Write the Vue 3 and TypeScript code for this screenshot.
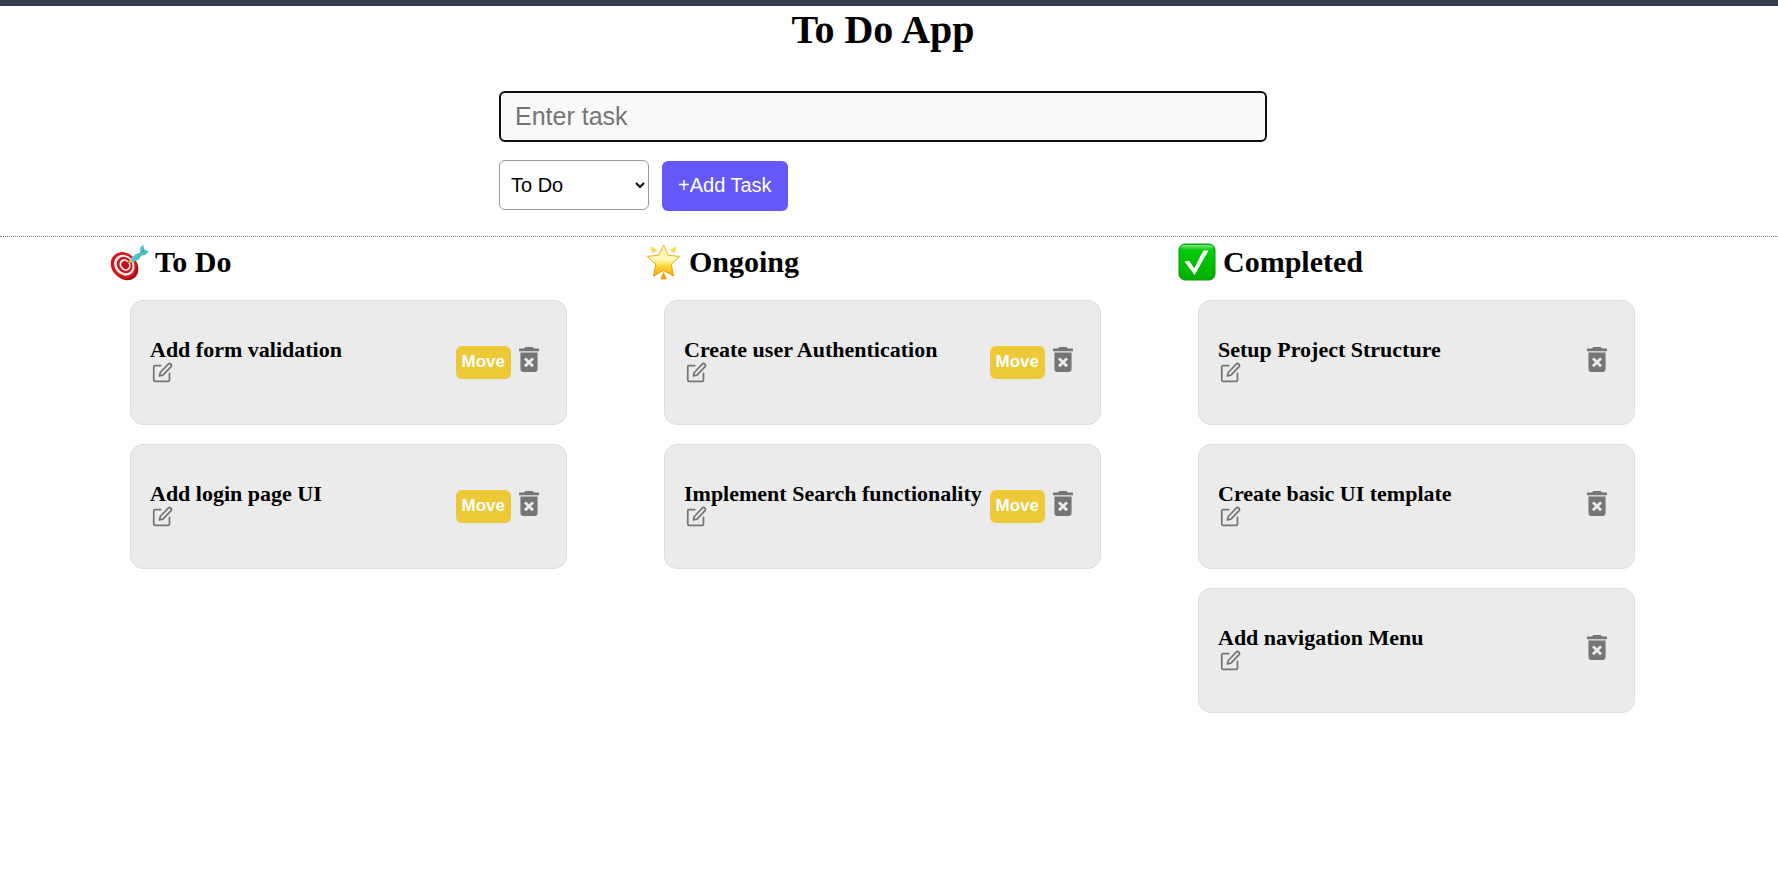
<script setup lang="ts">
import { ref } from 'vue'

type Status = 'todo' | 'ongoing' | 'completed'
interface Task { id: number; title: string; status: Status }

const columns: { key: Status; label: string }[] = [
  { key: 'todo', label: 'To Do' },
  { key: 'ongoing', label: 'Ongoing' },
  { key: 'completed', label: 'Completed' },
]

const tasks = ref<Task[]>([
  { id: 1, title: 'Add form validation', status: 'todo' },
  { id: 2, title: 'Add login page UI', status: 'todo' },
  { id: 3, title: 'Create user Authentication', status: 'ongoing' },
  { id: 4, title: 'Implement Search functionality', status: 'ongoing' },
  { id: 5, title: 'Setup Project Structure', status: 'completed' },
  { id: 6, title: 'Create basic UI template', status: 'completed' },
  { id: 7, title: 'Add navigation Menu', status: 'completed' },
])

const draft = ref('')
const draftStatus = ref<Status>('todo')
const editing = ref<Task | null>(null)

const tasksIn = (status: Status) => tasks.value.filter((t) => t.status === status)

function save() {
  const title = draft.value.trim()
  if (!title) return
  if (editing.value) editing.value.title = title
  else tasks.value.push({ id: Date.now(), title, status: draftStatus.value })
  editing.value = null
  draft.value = ''
}

function edit(task: Task) {
  editing.value = task
  draft.value = task.title
}

function move(task: Task) {
  task.status = task.status === 'todo' ? 'ongoing' : 'completed'
}

function remove(task: Task) {
  tasks.value = tasks.value.filter((t) => t.id !== task.id)
}
</script>

<template>
  <div class="page">
    <header class="header">
      <h1 class="title">To Do App</h1>
      <form class="form" @submit.prevent="save">
        <input v-model="draft" class="task-input" type="text" placeholder="Enter task" aria-label="Enter task" />
        <div class="actions">
          <select v-model="draftStatus" class="status" aria-label="Status">
            <option v-for="c in columns" :key="c.key" :value="c.key">{{ c.label }}</option>
          </select>
          <button class="add" type="submit">+Add Task</button>
        </div>
      </form>
    </header>

    <main class="board">
      <section v-for="c in columns" :key="c.key" class="column">
        <h2 class="heading">
          <svg v-if="c.key === 'todo'" class="emoji" viewBox="0 0 40 40" aria-hidden="true">
            <defs>
              <linearGradient id="dart" x1="0" y1="0" x2="1" y2="1">
                <stop offset="0" stop-color="#7fe3e6" /><stop offset="1" stop-color="#2a9fae" />
              </linearGradient>
            </defs>
            <ellipse cx="16.5" cy="25" rx="12" ry="14" transform="rotate(-40 16.5 25)" fill="#9c0d12" />
            <ellipse cx="14.8" cy="23.4" rx="12.4" ry="14" transform="rotate(-40 14.8 23.4)" fill="#d5151b" />
            <ellipse cx="15.3" cy="23.2" rx="9.6" ry="11" transform="rotate(-40 15.3 23.2)" fill="#f4eeee" />
            <ellipse cx="15.7" cy="23" rx="7.4" ry="8.6" transform="rotate(-40 15.7 23)" fill="#cf161c" />
            <ellipse cx="16" cy="23" rx="5.2" ry="6.1" transform="rotate(-40 16 23)" fill="#f4eeee" />
            <ellipse cx="16.2" cy="23" rx="3.5" ry="4.2" transform="rotate(-40 16.2 23)" fill="#bd1218" />
            <path d="M16.500 22.500l5-3.500" stroke="#7a3a1a" stroke-width="1" />
            <path d="M19.500 19.500l2.700-2.500 1.800 2.300-3 2.200z" fill="#e8b820" />
            <path d="M21.800 16.300l4.700-4.100 5-2-.9-4.200 3.600-3.500 1.400 5.300 4.200 1.500-3.800 3.700-3.500.4-2.500 3.800-6.500 3.600z" fill="url(#dart)" />
            <path d="M31.500 10.200l3.400-1.700" stroke="#2690a0" stroke-width="1" />
          </svg>
          <svg v-else-if="c.key === 'ongoing'" class="emoji" viewBox="0 0 40 40" aria-hidden="true">
            <defs>
              <linearGradient id="star" x1="0" y1="0" x2="0" y2="1">
                <stop offset="0" stop-color="#ffe14a" /><stop offset="1" stop-color="#f39a00" />
              </linearGradient>
              <linearGradient id="rim" x1="0" y1="0" x2="0" y2="1">
                <stop offset="0" stop-color="#e9b832" /><stop offset="1" stop-color="#ec9400" />
              </linearGradient>
              <linearGradient id="glow" x1="0" y1="0" x2="0" y2="1">
                <stop offset="0" stop-color="#fff59a" /><stop offset=".45" stop-color="#fffbc0" /><stop offset=".68" stop-color="#ffd83a" /><stop offset="1" stop-color="#f9a800" />
              </linearGradient>
            </defs>
            <path d="M20.500 3l4.600 10.200 11.400 1.200-8.300 8 2.300 11.600-10-5.600-10 5.600 2.300-11.600-8.300-8 11.400-1.200z" fill="url(#glow)" stroke="url(#rim)" stroke-width="1" stroke-linejoin="round" />
            <path d="M8 4.500l5.500 3.700-4 2.500zM33 4.500l-5.500 3.700 4 2.500zM20.500 30.500l2.700 6.500h-5.400z" fill="url(#star)" stroke="url(#star)" stroke-width=".8" stroke-linejoin="round" />
          </svg>
          <svg v-else class="emoji" viewBox="0 0 40 40" aria-hidden="true">
            <defs>
              <linearGradient id="tile" x1="0" y1="0" x2="0" y2="1">
                <stop offset="0" stop-color="#18bd21" /><stop offset=".2" stop-color="#00cc06" /><stop offset="1" stop-color="#00ad00" />
              </linearGradient>
              <linearGradient id="shine" x1="0" y1="0" x2="0" y2="1">
                <stop offset="0" stop-color="#7ee782" /><stop offset="1" stop-color="#08c80e" />
              </linearGradient>
            </defs>
            <rect x="2" y="2" width="36" height="36" rx="6" fill="url(#tile)" stroke="#079c0b" />
            <rect x="4" y="3" width="32" height="5" rx="3" fill="url(#shine)" />
            <path d="M7.500 19.500l4.500-.8 5.300 7.600 9-17.800h5.200L17.600 33z" fill="#fff" />
          </svg>
          <span>{{ c.label }}</span>
        </h2>
        <article v-for="task in tasksIn(c.key)" :key="task.id" class="card">
          <div class="info">
            <h3 class="name">{{ task.title }}</h3>
            <button class="icon-button" type="button" :aria-label="`Edit ${task.title}`" @click="edit(task)">
              <svg class="edit-icon" viewBox="0 0 24 24" aria-hidden="true">
                <path d="M10 4H3.500a1.500 1.500 0 0 0-1.500 1.500v15a1.500 1.500 0 0 0 1.500 1.500h15a1.500 1.500 0 0 0 1.500-1.500V13" />
                <path d="M18.500 2.500a2.121 2.121 0 0 1 3 3L12.500 15l-4 1 1-4z" />
              </svg>
            </button>
          </div>
          <div class="tools">
            <button v-if="c.key !== 'completed'" class="move" type="button" @click="move(task)">Move</button>
            <button class="icon-button" type="button" :aria-label="`Delete ${task.title}`" @click="remove(task)">
              <svg class="trash-icon" viewBox="5 3 14 18" preserveAspectRatio="none" aria-hidden="true">
                <path d="M6 19c0 1.100.9 2 2 2h8c1.100 0 2-.9 2-2V7H6v12zm2.460-7.120l1.410-1.410L12 12.590l2.120-2.120 1.410 1.410L13.410 14l2.120 2.120-1.410 1.410L12 15.410l-2.120 2.120-1.410-1.410L10.590 14l-2.130-2.120zM15.500 4l-1-1h-5l-1 1H5v2h14V4z" />
              </svg>
            </button>
          </div>
        </article>
      </section>
    </main>
  </div>
</template>

<style>
body {
  margin: 0;
  background: #fff;
}
</style>

<style scoped>
.page {
  border-top: 6px solid #333c4d;
  font-family: "Liberation Serif", "Times New Roman", serif;
  color: #000;
}
.header {
  padding: 0 12px 25px 0;
  border-bottom: 1px dotted #777;
}
.title {
  margin: 0;
  font-size: 40px;
  line-height: 48px;
  text-align: center;
}
.form {
  box-sizing: border-box;
  width: 768px;
  max-width: 100%;
  margin: 37px auto 0;
}
.task-input,
.status,
.add {
  box-sizing: border-box;
  font-family: "Liberation Sans", Arial, sans-serif;
  border-radius: 6px;
}
.task-input {
  display: block;
  width: 100%;
  height: 51px;
  padding: 0 14px;
  border: 2px solid #101010;
  background: #f9f9f9;
  font-size: 25px;
  outline: none;
}
.task-input::placeholder {
  color: #757575;
}
.actions {
  display: flex;
  gap: 13px;
  margin-top: 18px;
}
.status {
  width: 150px;
  height: 50px;
  padding: 0 7px;
  border: 1px solid #999;
  background: #fff;
  color: #000;
  font-size: 20px;
}
.add {
  height: 50px;
  padding: 0 16px 2px;
  margin-top: 1px;
  border: 0;
  background: #6558fb;
  color: #fff;
  font-size: 20px;
}
.board {
  display: grid;
  grid-template-columns: repeat(3, minmax(0, 1fr));
  padding: 0 94px 0 82px;
}
.column {
  padding: 0 49px 0 48px;
}
.heading {
  display: flex;
  align-items: center;
  gap: 6px;
  margin: 5px 0 18px -21px;
  font-size: 30px;
  line-height: 40px;
}
.emoji {
  width: 40px;
  height: 40px;
}
.card {
  box-sizing: border-box;
  display: flex;
  justify-content: space-between;
  align-items: center;
  min-height: 125px;
  margin-bottom: 19px;
  padding: 0 27px 0 19px;
  border: 1px solid #dcdcdc;
  border-radius: 13px;
  background: #ebebeb;
}
.info {
  min-width: 0;
  padding-bottom: 4px;
}
.name {
  margin: 0;
  font-size: 22px;
  line-height: 24px;
  white-space: nowrap;
}
.icon-button {
  display: block;
  padding: 0;
  border: 0;
  background: none;
}
.edit-icon {
  display: block;
  width: 21px;
  height: 21px;
  margin-left: 2px;
  fill: none;
  stroke: #757575;
  stroke-width: 2;
  stroke-linecap: round;
  stroke-linejoin: round;
}
.tools {
  display: flex;
  flex: none;
  align-items: flex-start;
  gap: 8px;
}
.tools .icon-button {
  padding: 1px 0 7px;
}
.move {
  height: 33px;
  padding: 0 6px 2px;
  border: 0;
  border-radius: 6px;
  background: #edc937;
  color: #fff;
  font: bold 17px "Liberation Sans", Arial, sans-serif;
}
.trash-icon {
  display: block;
  width: 20px;
  height: 25px;
  fill: #757575;
}
</style>
